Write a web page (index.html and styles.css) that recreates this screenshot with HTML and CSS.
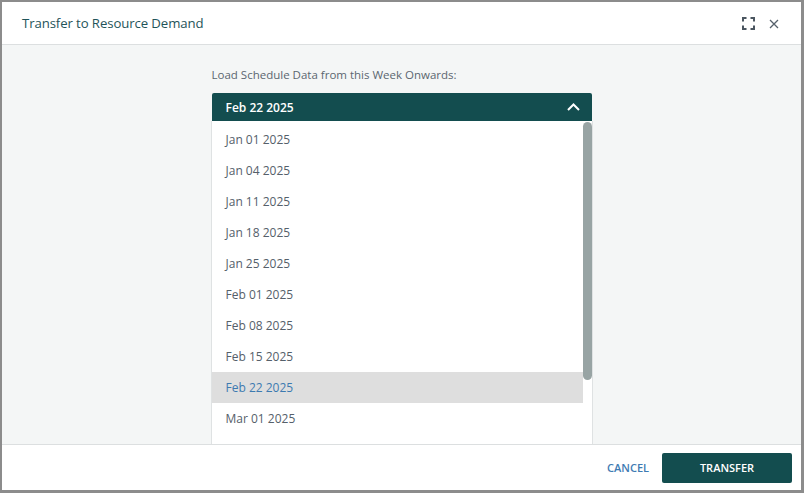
FILE: index.html
```html
<!DOCTYPE html>
<html>
<head>
<meta charset="utf-8">
<link rel="stylesheet" href="styles.css">
</head>
<body>
<div class="dialog">
  <div class="header">
    <div class="title">Transfer to Resource Demand</div>
    <div class="tools">
      <svg class="icon-expand" width="13" height="13" viewBox="0 0 13 13" fill="none" stroke="#4b5660" stroke-width="2">
        <path d="M1 4.5V1H4.5M8.5 1H12V4.5M12 8.5V12H8.5M4.5 12H1V8.5"/>
      </svg>
      <svg class="icon-close" width="10" height="10" viewBox="0 0 10 10" fill="none" stroke="#56616b" stroke-width="1.3">
        <path d="M1 1L9 9M9 1L1 9"/>
      </svg>
    </div>
  </div>
  <div class="body">
    <div class="field">
      <div class="label">Load Schedule Data from this Week Onwards:</div>
      <div class="select">
        <span>Feb 22 2025</span>
        <svg width="13" height="8" viewBox="0 0 13 8" fill="none" stroke="#ffffff" stroke-width="2">
          <path d="M1 7L6.5 1.5L12 7"/>
        </svg>
      </div>
      <div class="list">
        <div class="items">
          <div class="item">Jan 01 2025</div>
          <div class="item">Jan 04 2025</div>
          <div class="item">Jan 11 2025</div>
          <div class="item">Jan 18 2025</div>
          <div class="item">Jan 25 2025</div>
          <div class="item">Feb 01 2025</div>
          <div class="item">Feb 08 2025</div>
          <div class="item">Feb 15 2025</div>
          <div class="item selected">Feb 22 2025</div>
          <div class="item">Mar 01 2025</div>
        </div>
        <div class="track"><div class="thumb"></div></div>
      </div>
    </div>
  </div>
  <div class="footer">
    <button class="btn-cancel">CANCEL</button>
    <button class="btn-transfer">TRANSFER</button>
  </div>
</div>
</body>
</html>
```

FILE: styles.css
```css
html, body {
  margin: 0;
  padding: 0;
}
body {
  width: 804px;
  height: 493px;
  background: #8c8c8c;
  font-family: "Open Sans", "Noto Sans", sans-serif;
  overflow: hidden;
}
.dialog {
  margin: 2px 0 0 2px;
  width: 799px;
  height: 488px;
  background: #ffffff;
  display: flex;
  flex-direction: column;
}
.header {
  height: 42px;
  flex: none;
  display: flex;
  align-items: center;
  justify-content: space-between;
  padding: 0 22px 0 20px;
  border-bottom: 1px solid #dcdfe0;
}
.title {
  font-size: 13.2px;
  color: #1f5459;
  letter-spacing: -0.1px;
}
.tools {
  display: flex;
  align-items: center;
  gap: 14px;
}
.icon-close {
  margin-top: 1px;
}
.body {
  flex: 1;
  background: #f4f6f6;
  display: flex;
  justify-content: center;
  overflow: hidden;
}
.field {
  width: 380px;
  padding-top: 22px;
  display: flex;
  flex-direction: column;
}
.label {
  font-size: 11.5px;
  color: #5b6670;
  height: 16px;
  line-height: 16px;
  margin-bottom: 10px;
}
.select {
  height: 28px;
  flex: none;
  background: #134d4f;
  border-radius: 2px 2px 0 0;
  display: flex;
  align-items: center;
  justify-content: space-between;
  padding: 0 12px 0 14px;
  color: #ffffff;
  font-size: 12px;
  font-weight: 600;
}
.list {
  margin: 0 -1px;
  flex: 1;
  min-height: 0;
  background: #ffffff;
  border: 1px solid #dfe2e3;
  border-top: none;
  border-bottom: none;
  display: flex;
  overflow: hidden;
}
.items {
  flex: 1;
  padding-top: 3px;
}
.track {
  width: 9px;
  flex: none;
  padding-top: 1px;
}
.thumb {
  width: 9px;
  height: 258px;
  background: #98a4a4;
  border-radius: 5px;
}
.item {
  height: 31px;
  line-height: 31px;
  padding-left: 14px;
  font-size: 12px;
  color: #55606a;
}
.item.selected {
  background: #dedede;
  color: #3d7ab0;
}
.footer {
  height: 45px;
  flex: none;
  border-top: 1px solid #dcdfe0;
  display: flex;
  align-items: center;
  justify-content: flex-end;
  padding-right: 9px;
  gap: 13px;
}
button {
  font-family: "Open Sans", "Noto Sans", sans-serif;
  font-size: 11px;
  font-weight: 600;
  border: none;
  cursor: pointer;
}
.btn-cancel {
  background: none;
  color: #3e7bb3;
  padding: 0 0;
}
.btn-transfer {
  width: 130px;
  height: 30px;
  background: #134d4f;
  color: #ffffff;
  border-radius: 2px;
}
```
